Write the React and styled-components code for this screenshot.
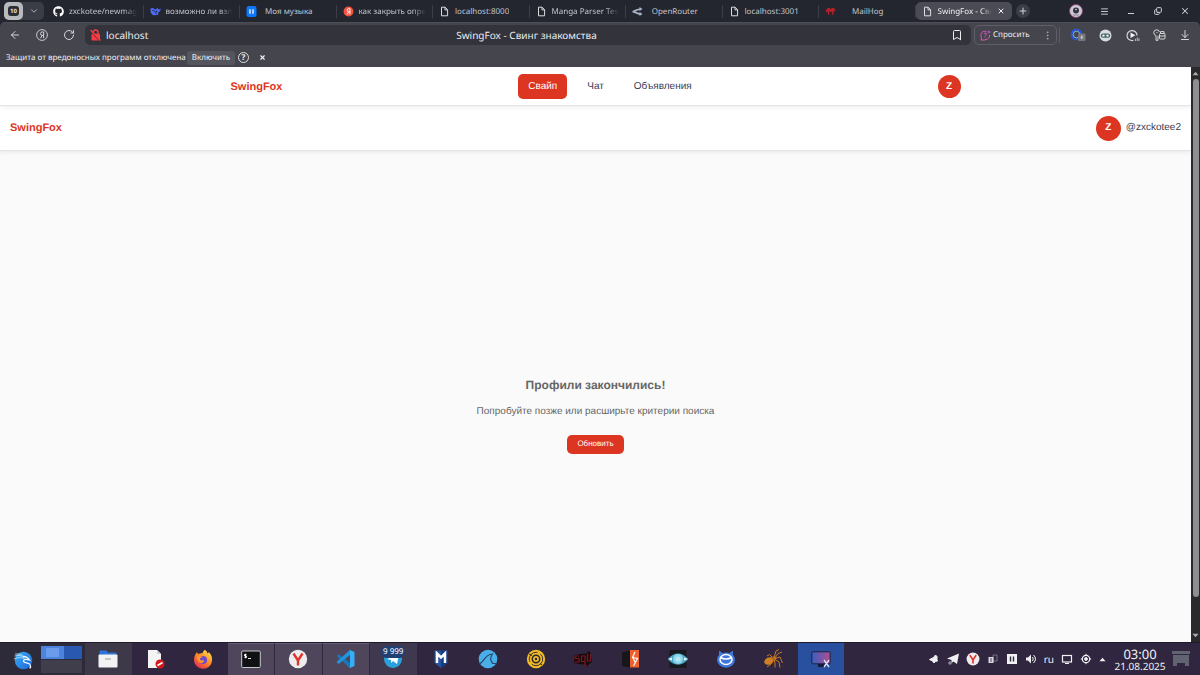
import React from "react";
import styled, { createGlobalStyle, css } from "styled-components";
import {
  ArrowDownToLine, ArrowLeft, Bookmark, ChevronDown, Copy, EllipsisVertical, Menu, Plus, RotateCw, X,
} from "lucide-react";
import { FaGithub } from "react-icons/fa6";

const ui = '"Noto Sans", "Open Sans", sans-serif';
const web = '"Liberation Sans", Arial, sans-serif';

const Global = createGlobalStyle`
  *, *::before, *::after { box-sizing: border-box; }
  body { margin: 0; background: #23252f; }
  button, input { font: inherit; color: inherit; border: 0; background: none; padding: 0; margin: 0; text-rendering: inherit; }
  button { cursor: pointer; }
  h1, h2, p { margin: 0; }
  svg { display: block; flex: none; }
`;

const Screen = styled.div`
  display: flex;
  flex-direction: column;
  min-height: 100vh;
  font-family: ${ui};
  font-size: 8px;
  line-height: 12px;
  text-rendering: geometricPrecision;
`;

/* ---------- tab strip ---------- */

const TabStrip = styled.div`
  display: flex;
  align-items: center;
  height: 22px;
  background: #23252f;
  color: #c3c5cb;
`;

const TabGroup = styled.div`
  display: flex;
  align-items: center;
  width: 40px;
  height: 18px;
  margin: 0 3px 0 4px;
  border-radius: 5px;
  background: #3b3d46;
`;

const TabCount = styled.button`
  display: grid;
  place-items: center;
  width: 19px;
  height: 18px;
  border-radius: 5px;
  background: #b9babd;

  span {
    width: 11px;
    height: 10px;
    border-radius: 3px;
    background: #2b2d35;
    color: #e8e8ea;
    font-size: 6px;
    font-weight: 700;
    line-height: 10px;
  }
`;

const GroupToggle = styled.button`
  flex: 1;
  display: grid;
  place-items: center;
`;

const Tabs = styled.div`
  flex: 1;
  display: flex;
  min-width: 0;
`;

const Tab = styled.div`
  flex: 1 1 0;
  min-width: 0;
  display: flex;
  align-items: center;
  gap: 5px;
  height: 18px;
  padding: 0 7px 0 6px;
  ${(p) =>
    p.$active
      ? css`
          border-radius: 5px;
          background: #4a4b54;
          color: #f0f0f2;
        `
      : css`
          background: linear-gradient(#3c3e48, #3c3e48) right center / 1px 13px no-repeat;
        `}
`;

const TabTitle = styled.button`
  flex: 1;
  min-width: 0;
  padding-top: 2px;
  overflow: hidden;
  white-space: nowrap;
  text-align: ${(p) => (p.$long ? "left" : "center")};
  margin-right: ${(p) => (p.$long ? 0 : 14)}px;
  ${(p) => p.$long && "mask-image: linear-gradient(90deg, #000 80%, transparent);"}
`;

const WindowControls = styled.div`
  display: flex;
  align-items: center;
  justify-content: space-between;
  width: 188px;
  padding: 0 9px 0 4px;
  color: #d0d1d6;
`;

const NewTab = styled.button`
  display: grid;
  place-items: center;
  width: 14px;
  height: 14px;
  margin-right: 24px;
  border-radius: 50%;
  background: #3b3d46;
`;

const IconButton = styled.button`
  display: grid;
  place-items: center;
  min-width: 12px;
  height: 16px;
`;

/* ---------- address row ---------- */

const Toolbar = styled.div`
  display: flex;
  align-items: center;
  height: 25px;
  padding: 0 9px;
  border-top: 1px solid #4d4d56;
  border-radius: 5px 5px 0 0;
  background: #45454e;
  color: #d6d6da;
`;

const NavButtons = styled.div`
  display: flex;
  gap: 15px;
  margin-right: 10px;
`;

const AddressField = styled.div`
  flex: 1;
  display: grid;
  grid-template-columns: 1fr auto 1fr;
  align-items: center;
  height: 20px;
  padding: 0 8px 0 5px;
  border-radius: 5px;
  background: #33333b;
  color: #ececef;
  font-size: 10px;
  line-height: 16px;
`;

const AddressStart = styled.div`
  display: flex;
  align-items: center;
  gap: 5px;

  input {
    width: 160px;
    outline: none;
  }
`;

const AddressEnd = styled.div`
  display: flex;
  justify-content: flex-end;
`;

const Ask = styled.div`
  display: flex;
  align-items: center;
  justify-content: space-between;
  width: 83px;
  height: 20px;
  margin: 0 2px 0 3px;
  padding: 0 3px 0 5px;
  border: 1px solid #5f5f69;
  border-radius: 5px;
  color: #f0f0f2;
`;

const AskButton = styled.button`
  display: flex;
  align-items: center;
  gap: 2px;
  line-height: 14px;
`;

const Extensions = styled.div`
  display: flex;
  align-items: center;
  justify-content: space-between;
  width: 132px;
  padding-left: 10px;
  border-left: 1px solid #5b5b64;
`;

/* ---------- protection notice ---------- */

const Notice = styled.div`
  display: flex;
  align-items: center;
  height: 20px;
  padding: 1px 6px 0;
  background: #45454e;
  color: #f0f0f2;
`;

const EnableButton = styled.button`
  height: 14px;
  margin: 0 3px 0 1px;
  padding: 0 5px;
  border-radius: 3px;
  background: #55555e;
`;

const HelpButton = styled.button`
  width: 11px;
  height: 11px;
  margin-right: 10px;
  border: 1px solid #e0e0e3;
  border-radius: 50%;
  font-weight: 700;
  line-height: 9px;
`;

/* ---------- web page ---------- */

const Viewport = styled.div`
  flex: 1;
  display: flex;
`;

const Page = styled.div`
  flex: 1;
  display: flex;
  flex-direction: column;
  background: #fafafa;
  font-family: ${web};
  font-size: 10px;
  line-height: 16px;
  color: #3b3a52;
`;

const bar = css`
  background: #fff;
  border-bottom: 1px solid #e4e4e4;
  box-shadow: 0 1px 5px rgba(0, 0, 0, 0.08);
`;

const SiteNav = styled.header`
  ${bar}
  position: relative;
  padding: 7px 10px 6px;
`;

const SiteNavInner = styled.div`
  display: flex;
  align-items: center;
  justify-content: space-between;
  max-width: 730px;
  margin: 0 auto;
`;

const Logo = styled.a`
  color: #dc3522;
  font-size: 11px;
  font-weight: 700;
  text-decoration: none;
`;

const Links = styled.nav`
  display: flex;
  gap: 10px;
`;

const NavLink = styled.a`
  padding: 5px 10px 4px;
  border-radius: 5px;
  text-decoration: none;
  color: ${(p) => (p.$active ? "#fff" : "inherit")};
  background: ${(p) => (p.$active ? "#dc3522" : "none")};
`;

const Avatar = styled.span`
  display: grid;
  place-items: center;
  width: ${(p) => p.$size}px;
  height: ${(p) => p.$size}px;
  border-radius: 50%;
  background: #dc3522;
  color: #fff;
  font-weight: 700;
`;

const SubHeader = styled.header`
  ${bar}
  display: flex;
  align-items: center;
  justify-content: space-between;
  height: 45px;
  padding: 0 10px;
`;

const User = styled.a`
  display: flex;
  align-items: center;
  gap: 5px;
  color: inherit;
  text-decoration: none;
`;

const Empty = styled.main`
  flex: 1;
  display: flex;
  flex-direction: column;
  align-items: center;
  justify-content: center;
  padding-top: 36px;
  color: #666;
  text-align: center;
`;

const EmptyTitle = styled.h2`
  margin-bottom: 10px;
  font-size: 12px;
  line-height: 18px;
`;

const EmptyText = styled.p`
  margin-bottom: 15px;
`;

const Refresh = styled.button`
  height: 19px;
  padding: 0 10px;
  border-radius: 5px;
  background: #dc3522;
  color: #fff;
  font-size: 8px;
`;

const Scrollbar = styled.div`
  display: flex;
  flex-direction: column;
  align-items: center;
  justify-content: space-between;
  width: 9px;
  padding: 4px 0;
  background: #2a2a2d;
`;

const Thumb = styled.div`
  flex: 1;
  width: 6px;
  margin: 3px 0 36px;
  border-radius: 3px;
  background: #8f8f91;
`;

/* ---------- desktop panel ---------- */

const Panel = styled.footer`
  display: flex;
  align-items: stretch;
  height: 33px;
  border-top: 1px solid #1f1b2a;
  background: #30263f;
  color: #f1f1f4;
`;

const PanelStart = styled.div`
  display: flex;
  align-items: center;
  gap: 8px;
  width: 85px;
  padding-left: 13px;
  background: #2d2b39;
`;

const Pager = styled.div`
  display: grid;
  gap: 1px;
  width: 41px;
`;

const Workspace = styled.button`
  display: block;
  height: 13px;
  padding: 2px 0 2px 5px;
  background: ${(p) => (p.$current ? "linear-gradient(90deg, #4c83dd 57%, #2858b0 57%)" : "#403e4b")};

  span {
    display: block;
    width: 13px;
    height: 9px;
    background: #6a9bec;
  }
`;

const Launchers = styled.div`
  display: flex;
  flex: 0 1 760px;
  min-width: 0;
`;

const fills = { none: "transparent", start: "#3d3949", open: "#4f465c", soft: "#40384e", active: "#28509f" };

const Launcher = styled.button`
  display: grid;
  place-items: center;
  flex: 1 1 0;
  min-width: 0;
  padding-bottom: 2px;
  background: ${(p) => fills[p.$fill]};
  border-right: 1px solid #30263f;
  border-top: 1px solid ${(p) => (p.$fill === "open" ? "#665c73" : "transparent")};
`;

const Badged = styled.span`
  position: relative;
  display: block;
`;

const Badge = styled.span`
  position: absolute;
  left: -2px;
  top: -3px;
  width: 24px;
  border-radius: 5px;
  background: #223f74;
  color: #fff;
  line-height: 12px;
  white-space: nowrap;
`;

const Tray = styled.div`
  display: flex;
  align-items: center;
  gap: 7px;
  margin-left: auto;
  margin-right: 7px;
  font-size: 10px;
`;

const Clock = styled.time`
  display: flex;
  flex-direction: column;
  align-items: center;
  justify-content: center;
  width: 54px;
  margin-right: 5px;
  font-size: 10px;
  line-height: 10px;

  span {
    font-size: 13px;
    line-height: 13px;
  }
`;

const ShowDesktop = styled.button`
  display: grid;
  place-items: center;
  width: 18px;
  margin-right: 10px;
`;

/* ---------- drawings ---------- */

const PageIcon = () => (
  <svg width="11" height="11" viewBox="0 0 11 11" fill="none" stroke="#dcdde0" strokeWidth="1">
    <path d="M2.5 1.2h3.6L8.6 3.7v6.1H2.5zM6 1.2v2.7h2.6" />
  </svg>
);
const WhaleIcon = () => (
  <svg width="11" height="11" viewBox="0 0 24 24" fill="#4d6bfe">
    <path d="M1 6c3-2 5-2 8 0l4 2c2 0 2-2 1-4 2 0 3 1 4 3 2 1 4 0 5-2 1 4-1 7-4 8-1 3-2 5-1 7l-5-1C7 23 0 17 1 6z" />
    <path d="M5 10c4-1 7 2 9 7" stroke="#23252f" strokeWidth="2" fill="none" />
    <circle cx="14.500" cy="12" r="1.500" fill="#23252f" />
  </svg>
);
const MusicIcon = () => (
  <svg width="11" height="11" viewBox="0 0 11 11">
    <rect x="0.500" width="10" height="11" rx="2.500" fill="#0c77ff" />
    <path d="M4 3.200v4.600M7 3.200v4.600" stroke="#fff" strokeWidth="1.300" />
  </svg>
);
const YaMark = ({ size, ring }) => (
  <svg width={size} height={size} viewBox="0 0 12 12" fill="none">
    <circle cx="6" cy="6" r="5.400" fill={ring ? "none" : "#f4533f"} stroke={ring ? "#d6d6da" : "none"} strokeWidth="0.900" />
    <path d="M7.600 9.200V2.900H6.300a1.750 1.750 0 0 0 0 3.500h1.300M6.200 6.400 4.500 9.200" stroke={ring ? "#d6d6da" : "#fff"} strokeWidth="1" />
  </svg>
);
const RouterIcon = () => (
  <svg width="11" height="11" viewBox="0 0 22 22" fill="none" stroke="#a9b6c9" strokeWidth="3.500">
    <path d="M1 11c6 0 7-5 17-5M1 11c6 0 7 5 17 5" />
    <path d="m15 2 6 4-6 4zM15 12l6 4-6 4z" fill="#a9b6c9" stroke="none" />
  </svg>
);
const HogIcon = () => (
  <svg width="11" height="11" viewBox="0 0 11 11" fill="#b3202b">
    <path d="M1 3.500 3 2h2l.5 1L7 2h2l1.200 1.500V6L9.500 5l-1 1v3H7.200V6.500L5.500 5.500 4.200 6v3H3V6.500L2 5.500 1 7z" />
  </svg>
);
const LockOff = () => (
  <svg width="11" height="12" viewBox="0 0 11 12">
    <path d="M3 5V3.500a2.500 2.500 0 0 1 5 0V5" fill="none" stroke="#fb3a41" strokeWidth="1.500" />
    <rect x="1.500" y="4.800" width="8.500" height="6.700" rx="1" fill="#fb3a41" />
    <path d="m0 2 9.500 10" stroke="#33333b" strokeWidth="1" />
    <path d="m0.500 1 10 10.500" stroke="#fb3a41" strokeWidth="1.200" />
  </svg>
);
const MinimizeIcon = () => (
  <svg width="8" height="10" viewBox="0 0 8 10" stroke="currentColor"><path d="M1 7.500h6" /></svg>
);
const Profile = () => (
  <svg width="14" height="14" viewBox="0 0 14 14">
    <circle cx="7" cy="7" r="6.500" fill="#cfc8d8" stroke="#7d4569" strokeWidth="1" />
    <circle cx="7" cy="6.500" r="3" fill="#35333d" />
    <circle cx="7" cy="5.500" r="0.800" fill="#e8e4ee" />
    <path d="M4 11h6" stroke="#8a8197" />
  </svg>
);
const AskIcon = () => (
  <svg width="11" height="11" viewBox="0 0 22 22" fill="none" stroke="#e65ac0" strokeWidth="2">
    <path d="M13 3C7 1 1 5 2 11c0 4 2 5 0 9 11 1 18-3 17-10" />
    <path d="M8 8c1-3 6-2 5 1-1 2-3 1-3 4m0 2v1" />
    <path d="m18 0 1 3 3 1-3 1-1 3-1-3-3-1 3-1z" fill="#d05ae6" stroke="none" />
  </svg>
);
const CookieExt = () => (
  <svg width="16" height="14" viewBox="0 0 16 14">
    <circle cx="6.500" cy="6.500" r="4.800" fill="none" stroke="#1f5df0" strokeWidth="2" strokeDasharray="2.700 0.500" />
    <circle cx="6.500" cy="6.500" r="3.300" fill="none" stroke="#b9cff7" strokeWidth="0.700" />
    <rect x="8" y="5.500" width="7.500" height="7.500" rx="1.500" fill="#77787f" />
    <path d="M11.800 7.500v3.500M10.500 9.200h2.600" stroke="#d5d5d8" strokeWidth="0.900" />
  </svg>
);
const MaskExt = () => (
  <svg width="13" height="13" viewBox="0 0 13 13">
    <circle cx="6.500" cy="6.500" r="6" fill="#d5dede" />
    <rect x="1.800" y="4.400" width="9.400" height="4.400" rx="2.200" fill="#4a6468" />
    <circle cx="4.500" cy="6.600" r="1.200" fill="#e8f1f1" />
    <circle cx="8.500" cy="6.600" r="1.200" fill="#e8f1f1" />
  </svg>
);
const PlayExt = () => (
  <svg width="14" height="13" viewBox="0 0 14 13" fill="none">
    <path d="M7.500 11.300A5 5 0 1 1 11 6.500" stroke="#d6d6da" strokeWidth="1.200" />
    <path d="m4.500 3.500 4.800 2.800-4.800 2.800z" fill="#f2f2f4" />
    <path d="M9.500 12V9.800M11.300 12V8.500M13 12V9.300" stroke="#b0b0b6" strokeWidth="1.100" />
  </svg>
);
const KeysExt = () => (
  <svg width="13" height="13" viewBox="0 0 13 13" fill="none" stroke="#d6d6da" strokeWidth="1">
    <path d="M5 6.800v4.500H3V6.500A2.900 2.900 0 1 1 6.500 3" />
    <rect x="6.500" y="4.500" width="5.500" height="5.500" rx="1" />
    <path d="M7 7h5M7.500 4.500V2.600h3.500v1.900M3.500 3.500h1" />
  </svg>
);
const Caret = ({ up, color = "#aaaaac" }) => (
  <svg width="7" height="5" viewBox="0 0 8 5" fill={color}>
    <path d={up ? "M4 .5 7.500 4.500h-7z" : "M4 4.500.5.5h7z"} />
  </svg>
);

const AppIcon = ({ children }) => (
  <svg width="20" height="20" viewBox="0 0 20 20" fill="none">{children}</svg>
);
const Kali = () => (
  <AppIcon>
    <defs>
      <linearGradient id="kali" x1="0" y1="0" x2="1" y2="1">
        <stop offset="0" stopColor="#35b4f5" />
        <stop offset="1" stopColor="#2061d8" />
      </linearGradient>
    </defs>
    <circle cx="10.500" cy="9.500" r="8.700" fill="url(#kali)" />
    <path d="M1.500 5c4-1 7-.5 9.500 1.500M.8 8C5 6 9 6.500 11.500 7.500M2 3C6 2.500 8 3.500 10 5" stroke="#d8efff" strokeWidth="0.700" />
    <path d="M10 5.500c3 0 5 1.200 6.500 3.500-3-1-6-1-6 1 0 2.500 5 1 6.500 3.500 1 1.500.5 3-.2 4" stroke="#f2faff" strokeWidth="1.300" />
  </AppIcon>
);
const Folder = () => (
  <AppIcon>
    <path d="M1.500 2.500q0-1 1-1H8l2 2h7.500q1 0 1 1V10h-17z" fill="#2f74d8" />
    <rect x="0.500" y="5.500" width="19" height="13" rx="1" fill="#f3f3f3" />
    <path d="M7 10h6" stroke="#b9b9b9" strokeWidth="1.500" />
  </AppIcon>
);
const DocBlocked = () => (
  <AppIcon>
    <path d="M2 1h9l4 4v14H2z" fill="#f4f4f4" />
    <path d="M11 1v4h4z" fill="#cfcfcf" />
    <circle cx="14" cy="15" r="4.500" fill="#d3181c" />
    <path d="m11.500 16.500 5-3" stroke="#fff" strokeWidth="1.700" />
  </AppIcon>
);
const Firefox = () => (
  <AppIcon>
    <defs>
      <linearGradient id="fox" x1="0.850" y1="0.050" x2="0.200" y2="0.950">
        <stop offset="0" stopColor="#ffe04a" />
        <stop offset="0.500" stopColor="#ff8626" />
        <stop offset="1" stopColor="#e62e55" />
      </linearGradient>
    </defs>
    <path d="M12 .8c1.500 1.200 2.200 2.300 2.500 3.700l1.300-1.300c2.500 2.200 3.700 5 3.200 8.300A9 8.500 0 0 1 1 11c0-3 1-5.500 3-8 .3 1 .7 1.500 1.300 2C6.500 4.300 8 4 9.500 4.300 9.800 3 10.700 1.700 12 .8z" fill="url(#fox)" />
    <circle cx="10" cy="11" r="4" fill="#6c49cf" />
    <path d="M4 7.500c2-1.200 4-.8 6 .8-2 0-3 .8-3.200 2 1 1.500 2.700 1.500 4 .8.800 1.500-1 3.400-3 3-2.500-.5-4-3.300-3.800-6.600z" fill="#ff9a2b" />
  </AppIcon>
);
const Terminal = () => (
  <AppIcon>
    <rect x="0.700" y="2" width="18.600" height="16.500" rx="1" fill="#101113" stroke="#c9c9cb" />
    <path d="M5.500 5.500H3.500v1.500h2v1.500h-2M4.500 4.700v4.600M7 9.500h3" stroke="#fff" strokeWidth="0.900" />
  </AppIcon>
);
const YBrowser = ({ size = 20 }) => (
  <svg width={size} height={size} viewBox="0 0 20 20" fill="none">
    <circle cx="10" cy="10" r="9.200" fill="#ededf0" />
    <path d="m5.500 4.500 4.500 7 4.500-7M10 11v5.500" stroke="#e0342b" strokeWidth="2.400" />
  </svg>
);
const VsCode = () => (
  <AppIcon>
    <path d="M14 1 5 10l9 9V15L8.500 10 14 5z" fill="#2196dd" />
    <path d="m1 6.500 1.500-1.300L15 14.500V19L1 7.500z" fill="#1577bd" />
    <path d="M1 13.500 2.500 15 14 6V1L1 12.500z" fill="#2196dd" />
    <path d="m14 1 4.500 2v14L14 19z" fill="#35aef3" />
  </AppIcon>
);
const Telegram = () => (
  <AppIcon>
    <circle cx="10" cy="10" r="9" fill="#2ba1dc" />
    <path d="m4 10 12-5-2 10-4-3-2 2v-3z" fill="#fff" />
  </AppIcon>
);
const Metasploit = () => (
  <AppIcon>
    <path d="M3.500 1.500h13V14L10 19l-6.500-5z" fill="#2455a4" />
    <path d="M10 1.500h6.500V14L10 19z" fill="#173d80" />
    <path d="M6 14V4.500l4 4 4-4V14" stroke="#fff" strokeWidth="2.500" />
  </AppIcon>
);
const Shark = () => (
  <AppIcon>
    <circle cx="10" cy="10" r="9.300" fill="#4aaee8" />
    <path d="M1.500 14.500c4 0 4.500-9 13-9.500-2 2.500-2.800 6 .3 9.500h3.700" stroke="#27476b" strokeWidth="1.200" />
  </AppIcon>
);
const Disc = () => (
  <AppIcon>
    <circle cx="10" cy="10" r="9.200" fill="#f0bb28" />
    <circle cx="10" cy="10" r="6.700" stroke="#2b2530" strokeWidth="0.900" strokeDasharray="15 3" />
    <circle cx="10" cy="10" r="3.700" stroke="#2b2530" strokeWidth="1.500" />
    <circle cx="10" cy="10" r="1.200" fill="#2b2530" />
    <path d="m3 5 3 1.500M14 14.500l2 1.500" stroke="#2b2530" />
  </AppIcon>
);
const SqlMap = () => (
  <AppIcon>
    <path d="M1 6.500 7 5l6-.5L16 2l1.500 2 1.500 9-4 3-1 2.500-2-3-6-.5-5-1z" fill="#180b0e" />
    <path d="M6 7H2v2.500h4V13H1.500M12 7H8.500v5.500H12M12 7v9l2 1.500M14.500 4.500V12h3V5" stroke="#7c1620" strokeWidth="1.200" />
  </AppIcon>
);
const Burp = () => (
  <AppIcon>
    <path d="m1 3.500 8-2v17l-8-1.500z" fill="#17171b" />
    <path d="M9 1h9v17.500H9z" fill="#f0602c" />
    <path d="m14 3-2.500 5.500 5 1-4 7.500M12 9l2 4" stroke="#fff" strokeWidth="1.200" />
  </AppIcon>
);
const Eye = () => (
  <AppIcon>
    <rect x="1.500" y="1" width="17" height="18" fill="#17191f" />
    <path d="M0 10c5-7.500 15-7.500 20 0-5 7.500-15 7.500-20 0z" fill="#4ba7c7" />
    <path d="m0 10 4-1.500v3zM20 10l-4-1.500v3z" fill="#e4f4f8" />
    <circle cx="10" cy="10" r="5" fill="#8fd6ea" />
    <circle cx="10" cy="10" r="2.500" fill="#b9e8f4" />
  </AppIcon>
);
const Cat = () => (
  <AppIcon>
    <path d="M3 1.500 6.500 4q3.500-1 7 0L17 1.500v4.200A9 8 0 1 1 3 5.700z" fill="#3f78dd" />
    <ellipse cx="10" cy="10.500" rx="6" ry="5" stroke="#fff" strokeWidth="1.500" />
    <path d="M4.300 8.500q5.700 3 11.400 0" stroke="#fff" strokeWidth="1.500" />
  </AppIcon>
);
const Spider = () => (
  <AppIcon>
    <ellipse cx="6" cy="12" rx="5" ry="3.500" fill="#d07f22" transform="rotate(-25 6 12)" />
    <circle cx="11" cy="9.500" r="2.200" fill="#b56918" />
    <path d="m11 9 2-7 3-1.500M12 9l3-4.500 4-1.500M12 9.500l5-1.500 2.500 6M12 10.500l4 2.500 1 5.500M11 11l1 3 0 4.500M9 8 6.500 5.500 4 7M9 12l-1 3-4 3" stroke="#c47a28" />
  </AppIcon>
);
const Monitor = () => (
  <AppIcon>
    <defs>
      <linearGradient id="screen" x1="0" x2="1">
        <stop offset="0" stopColor="#3a5fc0" />
        <stop offset="1" stopColor="#b04d90" />
      </linearGradient>
    </defs>
    <path d="M7 15h6v3H7z" fill="#171c33" />
    <rect x="0.800" y="2.800" width="18.400" height="12" rx="1" fill="url(#screen)" stroke="#1b2140" />
    <path d="m13 11 5 7M18 11l-5 7" stroke="#dfe2ef" strokeWidth="1.300" />
  </AppIcon>
);
const TrayIcon = ({ children }) => (
  <svg width="12" height="12" viewBox="0 0 12 12" fill="none" stroke="#f1f1f4">{children}</svg>
);

const tabs = [
  { icon: <FaGithub size={11} color="#fff" />, title: "zxckotee/newmag", long: true },
  { icon: <WhaleIcon />, title: "возможно ли взло", long: true },
  { icon: <MusicIcon />, title: "Моя музыка" },
  { icon: <YaMark size={11} />, title: "как закрыть опре", long: true },
  { icon: <PageIcon />, title: "localhost:8000" },
  { icon: <PageIcon />, title: "Manga Parser Test", long: true },
  { icon: <RouterIcon />, title: "OpenRouter" },
  { icon: <PageIcon />, title: "localhost:3001" },
  { icon: <HogIcon />, title: "MailHog" },
  { icon: <PageIcon />, title: "SwingFox - Сви", long: true, active: true },
];

const apps = [
  ["Файлы", <Folder />, "start"],
  ["Редактор", <DocBlocked />, "none"],
  ["Firefox", <Firefox />, "none"],
  ["Терминал", <Terminal />, "open"],
  ["Яндекс Браузер", <YBrowser />, "open"],
  ["Visual Studio Code", <VsCode />, "open"],
  ["Telegram", <Badged><Telegram /><Badge>9 999</Badge></Badged>, "soft"],
  ["Metasploit", <Metasploit />, "none"],
  ["Wireshark", <Shark />, "none"],
  ["Диск", <Disc />, "none"],
  ["sqlmap", <SqlMap />, "none"],
  ["Burp Suite", <Burp />, "none"],
  ["Eye", <Eye />, "none"],
  ["Cat", <Cat />, "none"],
  ["Spider", <Spider />, "none"],
  ["Экран", <Monitor />, "active"],
];

export default function App() {
  return (
    <Screen>
      <Global />
      <TabStrip>
        <TabGroup>
          <TabCount><span>10</span></TabCount>
          <GroupToggle aria-label="Группы вкладок"><ChevronDown size={10} strokeWidth={2} /></GroupToggle>
        </TabGroup>
        <Tabs>
          {tabs.map((t) => (
            <Tab key={t.title} $active={t.active}>
              {t.icon}
              <TabTitle $long={t.long}>{t.title}</TabTitle>
              {t.active && <button aria-label="Закрыть вкладку"><X size={8} strokeWidth={3} /></button>}
            </Tab>
          ))}
        </Tabs>
        <WindowControls>
          <NewTab aria-label="Новая вкладка"><Plus size={10} strokeWidth={2.5} /></NewTab>
          <IconButton aria-label="Профиль"><Profile /></IconButton>
          <IconButton aria-label="Меню"><Menu size={9} strokeWidth={2.5} /></IconButton>
          <IconButton aria-label="Свернуть"><MinimizeIcon /></IconButton>
          <IconButton aria-label="Окно"><Copy size={8} strokeWidth={3} transform="scale(1 -1)" /></IconButton>
          <IconButton aria-label="Закрыть"><X size={10} strokeWidth={2.5} /></IconButton>
        </WindowControls>
      </TabStrip>

      <Toolbar>
        <NavButtons>
          <IconButton aria-label="Назад"><ArrowLeft size={12} strokeWidth={2} /></IconButton>
          <IconButton aria-label="Яндекс"><YaMark size={12} ring /></IconButton>
          <IconButton aria-label="Обновить страницу"><RotateCw size={12} strokeWidth={2} /></IconButton>
        </NavButtons>
        <AddressField>
          <AddressStart>
            <LockOff />
            <input aria-label="Адрес" defaultValue="localhost" />
          </AddressStart>
          <span>SwingFox - Свинг знакомства</span>
          <AddressEnd>
            <IconButton aria-label="Закладка"><Bookmark size={12} strokeWidth={2} /></IconButton>
          </AddressEnd>
        </AddressField>
        <Ask>
          <AskButton><AskIcon />Спросить</AskButton>
          <IconButton aria-label="Ещё"><EllipsisVertical size={11} strokeWidth={1.5} color="#b5b5bb" /></IconButton>
        </Ask>
        <Extensions>
          <IconButton aria-label="Cookie"><CookieExt /></IconButton>
          <IconButton aria-label="Маска"><MaskExt /></IconButton>
          <IconButton aria-label="Видео"><PlayExt /></IconButton>
          <IconButton aria-label="Пароли"><KeysExt /></IconButton>
          <IconButton aria-label="Загрузки"><ArrowDownToLine size={12} strokeWidth={2} /></IconButton>
        </Extensions>
      </Toolbar>

      <Notice>
        <span>Защита от вредоносных программ отключена</span>
        <EnableButton>Включить</EnableButton>
        <HelpButton>?</HelpButton>
        <button aria-label="Закрыть уведомление"><X size={7} strokeWidth={4} /></button>
      </Notice>

      <Viewport>
        <Page>
          <SiteNav>
            <SiteNavInner>
              <Logo href="#">SwingFox</Logo>
              <Links>
                <NavLink href="#swipe" $active>Свайп</NavLink>
                <NavLink href="#chat">Чат</NavLink>
                <NavLink href="#ads">Объявления</NavLink>
              </Links>
              <Avatar $size={23}>Z</Avatar>
            </SiteNavInner>
          </SiteNav>
          <SubHeader>
            <Logo href="#">SwingFox</Logo>
            <User href="#profile"><Avatar $size={25}>Z</Avatar>@zxckotee2</User>
          </SubHeader>
          <Empty>
            <EmptyTitle>Профили закончились!</EmptyTitle>
            <EmptyText>Попробуйте позже или расширьте критерии поиска</EmptyText>
            <Refresh>Обновить</Refresh>
          </Empty>
        </Page>
        <Scrollbar>
          <Caret up />
          <Thumb />
          <Caret />
        </Scrollbar>
      </Viewport>

      <Panel>
        <PanelStart>
          <IconButton aria-label="Меню приложений"><Kali /></IconButton>
          <Pager>
            <Workspace $current aria-label="Рабочее место 1"><span /></Workspace>
            <Workspace aria-label="Рабочее место 2" />
          </Pager>
        </PanelStart>
        <Launchers>
          {apps.map(([name, icon, fill]) => (
            <Launcher key={name} aria-label={name} $fill={fill}>{icon}</Launcher>
          ))}
        </Launchers>
        <Tray>
          <TrayIcon><path d="m1.500 6.500 4-2 2-2.500 1.500 1.500v3l.5 1.500-2 .5L6 10 4.500 8z" fill="#f1f1f4" /></TrayIcon>
          <TrayIcon>
            <path d="m0 5.500 12-5-2 10.500-3.500-2.500-2 1.500V7z" fill="#f1f1f4" stroke="none" />
            <circle cx="3" cy="10" r="1.800" fill="#8d8a99" stroke="none" />
          </TrayIcon>
          <YBrowser size={14} />
          <TrayIcon>
            <path d="M6 2h4v6H6z" stroke="#77718a" />
            <rect x="1.500" y="4" width="5" height="6" fill="#d9d9de" stroke="none" />
            <path d="M3 6h2M3 8h2" stroke="#30263f" strokeWidth="0.800" />
          </TrayIcon>
          <TrayIcon>
            <rect x="1" y="1" width="10" height="10" fill="#f1f1f4" stroke="none" />
            <path d="M4.500 3.500v5M7.500 3.500v5" stroke="#30263f" strokeWidth="1.400" />
          </TrayIcon>
          <TrayIcon>
            <path d="M1 4.500h2l3-3v9l-3-3H1z" fill="#f1f1f4" stroke="none" />
            <path d="M7.500 4q1.500 2 0 4M8.500 2q4 4 0 8" />
          </TrayIcon>
          <span>ru</span>
          <TrayIcon><rect x="1.500" y="2.500" width="9" height="6.500" strokeWidth="1.200" /><path d="M4 10.500h4" /></TrayIcon>
          <TrayIcon>
            <circle cx="6" cy="6" r="3.700" strokeWidth="1.200" />
            <circle cx="6" cy="6" r="1.400" fill="#f1f1f4" />
            <path d="M6 .8v1.500M6 9.700v1.500M.8 6h1.500M9.700 6h1.500" />
          </TrayIcon>
          <Caret up color="#f1f1f4" />
        </Tray>
        <Clock><span>03:00</span>21.08.2025</Clock>
        <ShowDesktop aria-label="Показать рабочий стол">
          <svg width="18" height="16" viewBox="0 0 18 16" fill="#5f6470">
            <path d="M0 0h18v3H0zM1 4h16v11h-4v-3H5v3H1z" />
          </svg>
        </ShowDesktop>
      </Panel>
    </Screen>
  );
}
